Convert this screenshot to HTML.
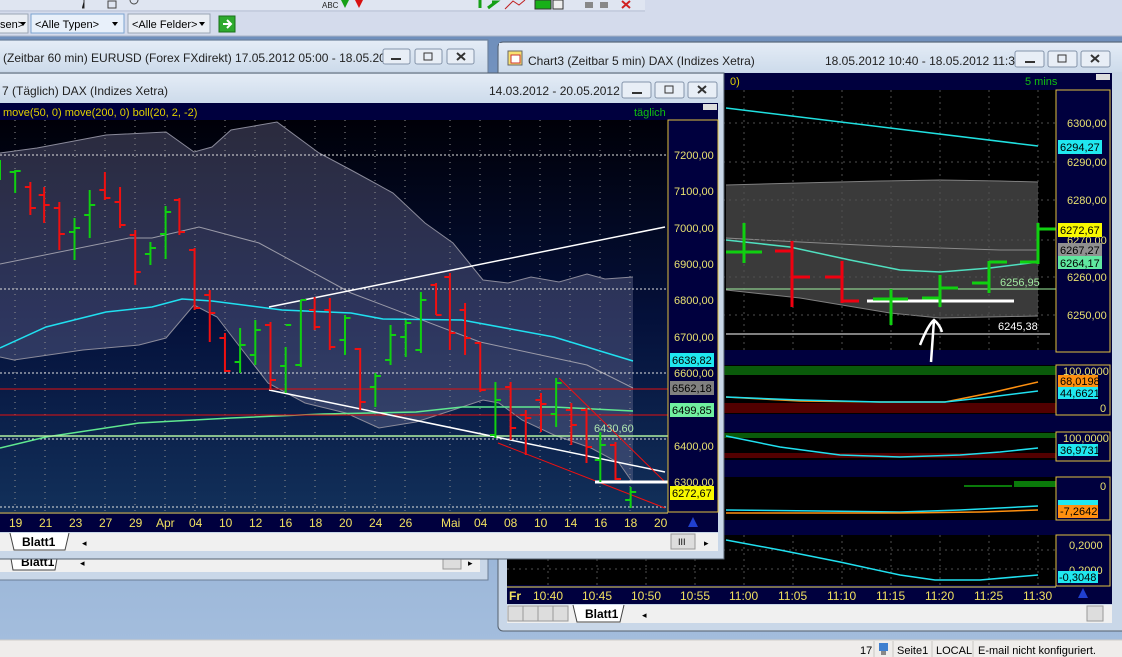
<!DOCTYPE html>
<html><head><meta charset="utf-8"><style>
html,body{margin:0;padding:0;width:1122px;height:657px;overflow:hidden;background:#8eaad0}
svg{display:block}
text{font-family:"Liberation Sans",sans-serif}
</style></head><body>
<svg width="1122" height="657" viewBox="0 0 1122 657" xmlns="http://www.w3.org/2000/svg">
<defs>
<linearGradient id="desk" x1="0" y1="0" x2="0" y2="1"><stop offset="0" stop-color="#6f8fbc"/><stop offset="1" stop-color="#a3bddd"/></linearGradient>
<linearGradient id="lbg" x1="0" y1="0" x2="0" y2="1"><stop offset="0" stop-color="#000008"/><stop offset="0.5" stop-color="#04103a"/><stop offset="1" stop-color="#12305a"/></linearGradient>
<linearGradient id="ttl" x1="0" y1="0" x2="0" y2="1"><stop offset="0" stop-color="#e4ecf6"/><stop offset="1" stop-color="#cddbeb"/></linearGradient>
</defs>
<rect x="0" y="36" width="1122" height="604" fill="url(#desk)"/>
<rect x="0" y="0" width="1122" height="36" fill="#d4dbec"/>
<rect x="0" y="0" width="645" height="10" fill="#dfe5f1"/>
<rect x="535" y="0" width="16" height="9" fill="#18b018" stroke="#333"/>
<rect x="553" y="0" width="10" height="9" fill="#eee" stroke="#333"/>
<path d="M341 0 l4 8 l4 -8" fill="#16a016"/><path d="M355 0 l4 8 l4 -8" fill="#d81010"/>
<path d="M480 0v8 M488 8 l8-6 l-4 0" stroke="#16a016" stroke-width="3" fill="none"/>
<path d="M84 0 v8 h-2" stroke="#333"/><path d="M108 1h8v7h-8z M130 0a4 4 0 0 0 8 0" stroke="#444" fill="none"/>
<text x="322" y="8" font-size="8" fill="#222">ABC</text>
<path d="M505 9 l8-8 l6 4 l6-5" stroke="#c02020" fill="none"/>
<path d="M585 2h8v6h-8z M600 2h8v6h-8z" fill="#888"/><path d="M622 1l8 7 M630 1l-8 7" stroke="#d02020" stroke-width="2"/>
<line x1="0" y1="11" x2="645" y2="11" stroke="#b8c2d4"/>
<rect x="-2" y="14" width="30" height="19" fill="#eaeef4" stroke="#9aa5b5"/><text x="0" y="28" font-size="11">sen&gt;</text><path d="M20 22l3 4 3-4z" fill="#000"/>
<rect x="31" y="14" width="93" height="19" fill="#e8f0fa" stroke="#7ba3d0"/><text x="35" y="28" font-size="11">&lt;Alle Typen&gt;</text><path d="M112 22l3 4 3-4z" fill="#000"/>
<rect x="128" y="14" width="82" height="19" fill="#eaeef4" stroke="#9aa5b5"/><text x="132" y="28" font-size="11">&lt;Alle Felder&gt;</text>
<path d="M199 22l3 4 3-4z" fill="#000"/>
<rect x="219" y="16" width="16" height="16" fill="#2eaa2e" stroke="#1a701a"/><path d="M223 24h7 M227 20l4 4-4 4" stroke="#fff" stroke-width="2" fill="none"/>
<line x1="0" y1="36" x2="1122" y2="36" stroke="#a9b3c6"/>

<!-- back window EURUSD -->
<rect x="-2" y="40" width="490" height="540" fill="#c9d7e8" stroke="#6b7d95"/>
<rect x="-1" y="41" width="488" height="30" fill="url(#ttl)"/>
<text x="3" y="62" font-size="12" fill="#222">(Zeitbar 60 min)  EURUSD (Forex FXdirekt) 17.05.2012 05:00 - 18.05.201...</text>
<g fill="#e8eef6" stroke="#8494aa"><rect x="383" y="49" width="27" height="15" rx="2"/><rect x="415" y="49" width="27" height="15" rx="2"/><rect x="447" y="49" width="27" height="15" rx="2"/></g>
<path d="M391 59h10" stroke="#333" stroke-width="2"/><rect x="424" y="53" width="8" height="7" fill="none" stroke="#333"/><path d="M457 53l8 7 M465 53l-8 7" stroke="#333" stroke-width="2"/>
<rect x="0" y="555" width="480" height="17" fill="#f0f0f0"/>
<path d="M10 553 l3 17 h42 l3-17" fill="#fff" stroke="#444"/><text x="21" y="566" font-size="12" font-weight="bold">Blatt1</text>
<text x="80" y="566" font-size="9">◂</text>
<rect x="443" y="554" width="18" height="15" fill="#ddd" stroke="#999"/><text x="468" y="566" font-size="9">▸</text>

<!-- right window Chart3 -->
<rect x="498" y="42" width="630" height="589" rx="5" fill="#c9d7e8" stroke="#55606e"/>
<rect x="499" y="43" width="623" height="29" fill="url(#ttl)"/>
<rect x="508" y="51" width="14" height="14" fill="#f8e070" stroke="#666"/><rect x="511" y="55" width="9" height="8" fill="#fff" stroke="#c33"/>
<text x="528" y="65" font-size="12" fill="#222">Chart3 (Zeitbar 5 min)  DAX (Indizes Xetra)</text>
<text x="825" y="65" font-size="12" fill="#222">18.05.2012 10:40 - 18.05.2012 11:30</text>
<g fill="#e8eef6" stroke="#8494aa"><rect x="1015" y="51" width="29" height="16" rx="2"/><rect x="1048" y="51" width="29" height="16" rx="2"/><rect x="1081" y="51" width="29" height="16" rx="2"/></g>
<path d="M1025 62h10" stroke="#333" stroke-width="2"/><rect x="1058" y="55" width="8" height="7" fill="none" stroke="#333"/><path d="M1091 55l8 7 M1099 55l-8 7" stroke="#333" stroke-width="2"/>
<rect x="507" y="73" width="605" height="531" fill="#00003e"/>
<text x="730" y="85" font-size="11" fill="#e0d000">0)</text>
<text x="1025" y="85" font-size="11" fill="#10c010">5 mins</text>
<rect x="1096" y="74" width="14" height="6" fill="#ddd"/>
<rect x="507" y="90" width="549" height="260" fill="#000"/>
<polygon points="726,185 800,183 880,181 940,180 1000,181 1038,182 1038,316 940,318 890,313 800,298 726,290" fill="#3a3a3a"/>
<polyline points="726,185 800,183 880,181 940,180 1000,181 1038,182" fill="none" stroke="#808080"/>
<polyline points="726,290 800,298 890,313 940,318 1038,316" fill="none" stroke="#808080"/>
<polyline points="726,238 800,242 880,246 940,248 1000,250 1038,250" fill="none" stroke="#8a8a8a"/>
<g stroke="#505050" stroke-dasharray="2,4"><path d="M507 123H1056 M507 162H1056 M507 200H1056 M507 240H1056 M507 277H1056 M507 315H1056"/><path d="M548 90V350 M597 90V350 M646 90V350 M695 90V350 M744 90V350 M793 90V350 M842 90V350 M891 90V350 M940 90V350 M989 90V350 M1038 90V350"/></g>
<line x1="726" y1="108" x2="1038" y2="146" stroke="#20e0e0" stroke-width="1.5"/>
<polyline points="726,240 790,247 850,260 900,270 940,272 990,268 1038,262" fill="none" stroke="#50e0c0" stroke-width="1.5"/>
<line x1="726" y1="289" x2="1056" y2="289" stroke="#a0f0a0"/>
<line x1="726" y1="334" x2="1050" y2="334" stroke="#fff"/>
<line x1="867" y1="301" x2="1014" y2="301" stroke="#fff" stroke-width="3"/>
<g stroke="#10d010" stroke-width="3" fill="none">
<path d="M744 223V263 M726 252H762"/><path d="M891 289V325 M873 299H908"/><path d="M940 275V307 M922 298H940 M940 288H958"/><path d="M989 261V293 M972 283H989 M989 262H1007"/><path d="M1038 223V264 M1020 262H1038 M1038 229H1056"/>
</g>
<g stroke="#f00010" stroke-width="3" fill="none"><path d="M792 241V307 M775 251H792 M792 277H810"/><path d="M842 261V303 M825 277H842 M842 301H859"/></g>
<path d="M920 345 q8-20 14-25 q6 5 8 12 M934 320 l-3 42" stroke="#fff" stroke-width="2.5" fill="none"/>
<text x="1000" y="286" font-size="11" fill="#a0e8a0">6256,95</text>
<text x="998" y="330" font-size="11" fill="#fff">6245,38</text>
<rect x="1056" y="90" width="54" height="262" fill="#00003e" stroke="#e0c040"/>
<g font-size="11" fill="#e8e070"><text x="1067" y="127">6300,00</text><text x="1067" y="166">6290,00</text><text x="1067" y="204">6280,00</text><text x="1067" y="244">6270,00</text><text x="1067" y="281">6260,00</text><text x="1067" y="319">6250,00</text></g>
<rect x="1058" y="140" width="44" height="14" fill="#20e8f0"/><text x="1060" y="151" font-size="11">6294,27</text>
<rect x="1058" y="223" width="44" height="14" fill="#f8f800"/><text x="1060" y="234" font-size="11">6272,67</text>
<rect x="1058" y="243" width="44" height="13" fill="#909090"/><text x="1060" y="254" font-size="11">6267,27</text>
<rect x="1058" y="256" width="44" height="13" fill="#60e8a0"/><text x="1060" y="267" font-size="11">6264,17</text>
<rect x="507" y="365" width="549" height="49" fill="#000"/>
<rect x="507" y="366" width="549" height="9" fill="#0a5a0a"/><rect x="507" y="403" width="549" height="10" fill="#520000"/>
<polyline points="726,397 800,401 880,402 945,402 990,393 1038,382" fill="none" stroke="#ff9010" stroke-width="1.5"/>
<polyline points="726,397 800,400 880,402 945,402 990,397 1038,391" fill="none" stroke="#20e0f0" stroke-width="1.5"/>
<rect x="1056" y="365" width="54" height="50" fill="#00003e" stroke="#e0c040"/>
<text x="1063" y="375" font-size="11" fill="#e8e070">100,0000</text>
<rect x="1058" y="375" width="40" height="12" fill="#ff9010"/><text x="1060" y="385" font-size="11">68,0198</text>
<rect x="1058" y="387" width="40" height="12" fill="#20e8f0"/><text x="1060" y="397" font-size="11">44,6621</text>
<text x="1100" y="412" font-size="11" fill="#e8e070">0</text>
<rect x="507" y="432" width="549" height="28" fill="#000"/>
<rect x="507" y="433" width="549" height="5" fill="#0a5a0a"/><rect x="507" y="453" width="549" height="5" fill="#520000"/>
<polyline points="726,436 780,447 840,455 900,457 960,455 1000,452 1038,448" fill="none" stroke="#20e0f0" stroke-width="1.5"/>
<rect x="1056" y="432" width="54" height="29" fill="#00003e" stroke="#e0c040"/>
<text x="1063" y="442" font-size="11" fill="#e8e070">100,0000</text>
<rect x="1058" y="444" width="40" height="12" fill="#20e8f0"/><text x="1060" y="454" font-size="11">36,9731</text>
<rect x="507" y="477" width="549" height="43" fill="#000"/>
<rect x="507" y="481" width="42" height="6" fill="#0a7a0a"/><rect x="549" y="483" width="60" height="4" fill="#0a7a0a"/><rect x="609" y="485" width="60" height="2" fill="#0a7a0a"/>
<rect x="964" y="485" width="48" height="2" fill="#0a7a0a"/><rect x="1014" y="481" width="42" height="6" fill="#0a7a0a"/>
<polyline points="726,510 820,511 900,512 960,510 1000,508 1038,506" fill="none" stroke="#20e0f0" stroke-width="1.5"/>
<polyline points="726,513 900,513 980,512 1038,510" fill="none" stroke="#ff9010" stroke-width="1.5"/>
<rect x="1056" y="477" width="54" height="43" fill="#00003e" stroke="#e0c040"/>
<text x="1100" y="490" font-size="11" fill="#e8e070">0</text>
<rect x="1058" y="500" width="40" height="8" fill="#20e8f0"/>
<rect x="1058" y="505" width="40" height="13" fill="#ff9010"/><text x="1060" y="515" font-size="11">-7,2642</text>
<rect x="507" y="535" width="549" height="50" fill="#000"/>
<g stroke="#505050" stroke-dasharray="2,4"><path d="M507 550H1056 M507 569H1056"/><path d="M548 535V585 M597 535V585 M646 535V585 M695 535V585 M744 535V585 M793 535V585 M842 535V585 M891 535V585 M940 535V585 M989 535V585 M1038 535V585"/></g>
<polyline points="726,540 780,550 840,562 900,575 935,580 980,580 1038,575" fill="none" stroke="#20e0f0" stroke-width="1.5"/>
<rect x="1056" y="535" width="54" height="51" fill="#00003e" stroke="#e0c040"/>
<text x="1069" y="549" font-size="11" fill="#e8e070">0,2000</text>
<text x="1069" y="574" font-size="11" fill="#e8e070">0,2000</text>
<rect x="1058" y="571" width="40" height="12" fill="#20e8f0"/><text x="1059" y="581" font-size="11">-0,3048</text>
<line x1="507" y1="587" x2="1056" y2="587" stroke="#f0e060"/>
<g font-size="12" fill="#f0e060"><text x="509" y="600" font-weight="bold">Fr</text><text x="533" y="600">10:40</text><text x="582" y="600">10:45</text><text x="631" y="600">10:50</text><text x="680" y="600">10:55</text><text x="729" y="600">11:00</text><text x="778" y="600">11:05</text><text x="827" y="600">11:10</text><text x="876" y="600">11:15</text><text x="925" y="600">11:20</text><text x="974" y="600">11:25</text><text x="1023" y="600">11:30</text></g>
<path d="M1078 598 l5-10 l5 10z" fill="#2040d0"/>
<rect x="507" y="605" width="605" height="18" fill="#f0f0f0"/>
<g fill="#ddd" stroke="#999"><rect x="508" y="606" width="15" height="15"/><rect x="523" y="606" width="15" height="15"/><rect x="538" y="606" width="15" height="15"/><rect x="553" y="606" width="15" height="15"/></g>
<path d="M573 605 l4 17 h43 l4-17" fill="#fff" stroke="#444"/><text x="585" y="618" font-size="12" font-weight="bold">Blatt1</text>
<text x="642" y="618" font-size="9">◂</text>
<rect x="1087" y="606" width="16" height="15" fill="#ddd" stroke="#999"/>

<!-- front window DAX daily -->
<rect x="-2" y="73" width="726" height="486" fill="#c9d7e8" stroke="#55606e"/>
<rect x="-1" y="74" width="724" height="29" fill="url(#ttl)"/>
<text x="2" y="95" font-size="12" fill="#222">7 (Täglich)  DAX (Indizes Xetra)</text>
<text x="489" y="95" font-size="12" fill="#222">14.03.2012 - 20.05.2012</text>
<g fill="#e8eef6" stroke="#8494aa"><rect x="622" y="82" width="29" height="16" rx="2"/><rect x="655" y="82" width="29" height="16" rx="2"/><rect x="688" y="82" width="29" height="16" rx="2"/></g>
<path d="M632 93h10" stroke="#333" stroke-width="2"/><rect x="665" y="86" width="8" height="7" fill="none" stroke="#333"/><path d="M698 86l8 7 M706 86l-8 7" stroke="#333" stroke-width="2"/>
<rect x="0" y="103" width="718" height="429" fill="#00003e"/>
<text x="3" y="116" font-size="11" fill="#e0d000">move(50, 0) move(200, 0) boll(20, 2, -2)</text>
<text x="634" y="116" font-size="11" fill="#10c010">täglich</text>
<rect x="703" y="104" width="14" height="6" fill="#ddd"/>
<rect x="0" y="120" width="668" height="392" fill="url(#lbg)"/>
<polygon points="0,153 37,148 106,135 166,132 194,152 212,147 231,130 277,122 319,153 351,170 393,193 425,223 453,243 483,280 508,283 531,277 559,282 587,274 605,279 633,277 633,483 619,463 591,448 554,435 522,420 499,403 483,400 453,410 416,422 379,428 346,413 305,403 268,383 240,347 217,317 194,305 166,338 139,345 83,350 14,360 0,357" fill="#7a7aa0" fill-opacity="0.35"/>
<polyline points="0,153 37,148 106,135 166,132 194,152 212,147 231,130 277,122 319,153 351,170 393,193 425,223 453,243 483,280 508,283 531,277 559,282 587,274 605,279 633,277" fill="none" stroke="#8a8a9a"/>
<polyline points="0,357 14,360 83,350 139,345 166,338 194,305 217,317 240,347 268,383 305,403 346,413 379,428 416,422 453,410 483,400 499,403 522,420 554,435 591,448 619,463 633,483" fill="none" stroke="#8a8a9a"/>
<polyline points="0,264 129,238 152,238 199,227 259,243 351,293 480,342 587,365 633,388" fill="none" stroke="#9a9aa8"/>
<g stroke="#909090" stroke-dasharray="1,5"><path d="M15 120V512 M45 120V512 M75 120V512 M105 120V512 M135 120V512 M165 120V512 M195 120V512 M225 120V512 M255 120V512 M285 120V512 M315 120V512 M345 120V512 M375 120V512 M405 120V512 M450 120V512 M480 120V512 M510 120V512 M540 120V512 M570 120V512 M600 120V512 M630 120V512"/></g>
<g stroke="#e0e0e0" stroke-dasharray="2,2"><path d="M0 155H668 M0 289H668 M0 373H668 M0 439H668 M0 507H668"/></g>
<polyline points="0,348 46,327 106,312 152,307 182,299 212,301 282,310 351,313 383,319 462,320 554,337 633,361" fill="none" stroke="#20e0f0" stroke-width="1.5"/>
<polyline points="0,448 46,437 139,423 231,418 323,414 416,412 462,407 554,407 633,411" fill="none" stroke="#60e890" stroke-width="1.5"/>
<line x1="0" y1="436" x2="668" y2="436" stroke="#b0f0a0" stroke-width="1.5"/>
<line x1="0" y1="389" x2="668" y2="389" stroke="#e01010"/>
<line x1="0" y1="415" x2="668" y2="415" stroke="#e01010"/>
<line x1="269" y1="307" x2="665" y2="227" stroke="#fff" stroke-width="1.5"/>
<line x1="269" y1="390" x2="665" y2="472" stroke="#fff" stroke-width="1.5"/>
<line x1="498" y1="443" x2="665" y2="508" stroke="#f01010"/>
<line x1="559" y1="378" x2="665" y2="482" stroke="#f01010"/>
<line x1="595" y1="482" x2="686" y2="482" stroke="#fff" stroke-width="3"/>
<text x="594" y="432" font-size="11" fill="#b0e8b0">6430,60</text>
<g transform="scale(1.38,1)" fill="none">
<g stroke="#10d010"><path vector-effect="non-scaling-stroke" stroke-width="2" d="M0 160V180 M11 170V193 M7 172H11 M11 171H15 M54 218V260 M50 232H54 M54 228H58 M65 190V238 M61 215H65 M65 205H69 M109 242V265 M105 254H109 M109 248H113 M120 206V259 M116 234H120 M120 212H124 M174 328V373 M170 362H174 M174 345H178 M185 320V365 M181 355H185 M185 330H189 M207 347V393 M203 366H207 M207 325H211 M218 300V367 M214 365H218 M218 300H222 M250 315V355 M246 340H250 M250 318H254 M272 373V407 M268 387H272 M272 376H276 M283 325V365 M279 360H283 M283 335H287 M294 320V357 M290 337H294 M294 323H298 M305 292V353 M301 350H305 M305 300H309 M359 382V438 M359 400H363 M355 435H359 M403 378V427 M399 414H403 M403 383H407 M435 432V482 M431 460H435 M435 445H439 M457 487V508 M453 500H457 M457 492H461"/></g>
<g stroke="#f01010"><path vector-effect="non-scaling-stroke" stroke-width="2" d="M22 182V215 M18 187H22 M22 208H26 M32 187V223 M28 195H32 M32 205H36 M43 202V250 M39 208H43 M43 234H47 M76 172V200 M72 190H76 M76 198H80 M87 187V228 M83 202H87 M87 225H91 M98 230V285 M94 235H98 M98 272H102 M130 198V235 M126 200H130 M130 232H134 M141 248V310 M137 250H141 M141 308H145 M152 290V342 M148 295H152 M152 313H156 M163 333V372 M159 338H163 M163 371H167 M196 322V390 M192 325H196 M196 380H200 M228 297V330 M224 310H228 M228 327H232 M239 298V350 M235 310H239 M239 347H243 M261 348V410 M257 349H261 M261 402H265 M316 283V315 M312 285H316 M316 315H320 M326 273V350 M322 277H326 M326 333H330 M337 303V355 M333 310H337 M337 338H341 M348 342V392 M344 343H348 M348 390H352 M370 382V440 M366 387H370 M370 428H374 M381 410V455 M377 415H381 M381 418H385 M392 393V432 M388 400H392 M392 404H396 M414 403V445 M410 410H414 M414 425H418 M425 408V463 M421 410H425 M425 447H429 M446 442V480 M442 445H446 M446 479H450"/></g>
</g>
<rect x="668" y="120" width="50" height="392" fill="#00003e" stroke="#e0c040"/>
<g font-size="11" fill="#e8e070"><text x="674" y="159">7200,00</text><text x="674" y="195">7100,00</text><text x="674" y="232">7000,00</text><text x="674" y="268">6900,00</text><text x="674" y="304">6800,00</text><text x="674" y="341">6700,00</text><text x="674" y="377">6600,00</text><text x="674" y="450">6400,00</text><text x="674" y="486">6300,00</text></g>
<rect x="670" y="353" width="44" height="14" fill="#20e8f0"/><text x="672" y="364" font-size="11">6638,82</text>
<rect x="670" y="381" width="44" height="14" fill="#808080"/><text x="672" y="392" font-size="11">6562,18</text>
<rect x="670" y="403" width="44" height="14" fill="#70f0a0"/><text x="672" y="414" font-size="11">6499,85</text>
<rect x="670" y="486" width="44" height="14" fill="#f8f800"/><text x="672" y="497" font-size="11">6272,67</text>
<line x1="0" y1="513" x2="668" y2="513" stroke="#f0e060"/>
<g font-size="12" fill="#f0e060"><text x="9" y="527">19</text><text x="39" y="527">21</text><text x="69" y="527">23</text><text x="99" y="527">27</text><text x="129" y="527">29</text><text x="156" y="527">Apr</text><text x="189" y="527">04</text><text x="219" y="527">10</text><text x="249" y="527">12</text><text x="279" y="527">16</text><text x="309" y="527">18</text><text x="339" y="527">20</text><text x="369" y="527">24</text><text x="399" y="527">26</text><text x="441" y="527">Mai</text><text x="474" y="527">04</text><text x="504" y="527">08</text><text x="534" y="527">10</text><text x="564" y="527">14</text><text x="594" y="527">16</text><text x="624" y="527">18</text><text x="654" y="527">20</text></g>
<path d="M688 527 l5-10 l5 10z" fill="#2040d0"/>
<rect x="0" y="533" width="718" height="18" fill="#f0f0f0"/>
<path d="M10 533 l4 17 h51 l4-17" fill="#fff" stroke="#444"/><text x="22" y="546" font-size="12" font-weight="bold">Blatt1</text>
<text x="82" y="546" font-size="9">◂</text>
<rect x="671" y="534" width="24" height="15" fill="#ddd" stroke="#999"/><text x="678" y="545" font-size="9">III</text><text x="704" y="546" font-size="9">▸</text>

<rect x="0" y="640" width="1122" height="17" fill="#efedeb"/>
<line x1="0" y1="640" x2="1122" y2="640" stroke="#cfcdca"/>
<g font-size="11" fill="#000"><text x="860" y="654">17</text><text x="897" y="654">Seite1</text><text x="936" y="654">LOCAL</text><text x="978" y="654">E-mail nicht konfiguriert.</text></g>
<rect x="879" y="643" width="9" height="8" fill="#4080d0"/><rect x="881" y="651" width="5" height="4" fill="#888"/>
<path d="M874 641V657 M893 641V657 M932 641V657 M973 641V657" stroke="#c8c6c3"/>
</svg>
</body></html>
